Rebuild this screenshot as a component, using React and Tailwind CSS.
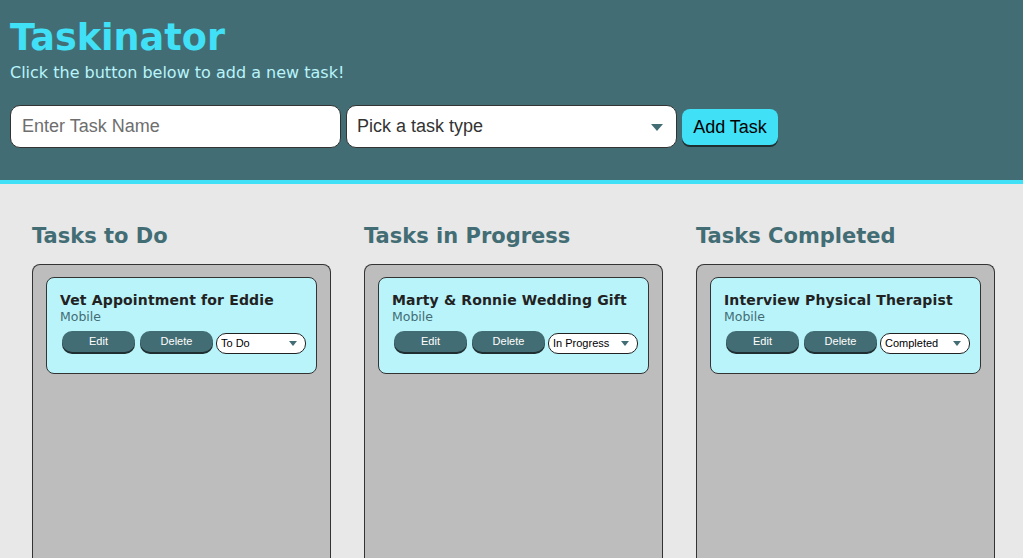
import { useState } from 'react';

/* ── Task card ─────────────────────────────────────────────── */
function TaskCard({ name, type, status }) {
  const [value, setValue] = useState(status);
  return (
    <div className="mx-[13px] mt-[11px] h-[97px] rounded-[8px] border border-[#333] bg-[#b9f4fb] px-[13px] pt-[14px]">
      <h3 className="text-[14px] font-bold leading-[17px] tracking-[0.15px] text-[#222] [font-family:'DejaVu_Sans',Verdana,sans-serif]">
        {name}
      </h3>
      <p className="text-[12.5px] leading-[15px] text-[#436d74] [font-family:'DejaVu_Sans',Verdana,sans-serif]">
        {type}
      </p>
      <div className="mt-[7px] flex items-start pl-[2px] [font-family:'Liberation_Sans',Arial,sans-serif]">
        <button className="h-[21px] w-[73px] shrink-0 rounded-[10px] bg-[#436d74] text-[11px] font-medium text-white shadow-[0_2px_0_#1f2f31]">
          Edit
        </button>
        <button className="ml-[5px] h-[21px] w-[73px] shrink-0 rounded-[10px] bg-[#436d74] text-[11px] font-medium text-white shadow-[0_2px_0_#1f2f31]">
          Delete
        </button>
        <div className="relative ml-[3px] mt-[2px] flex shrink-0">
          <select
            value={value}
            onChange={e => setValue(e.target.value)}
            className="block h-[21px] w-[90px] appearance-none rounded-[10px] border border-[#222] bg-white pl-[4px] text-[11px] text-black outline-none"
          >
            <option>To Do</option>
            <option>In Progress</option>
            <option>Completed</option>
          </select>
          <span className="pointer-events-none absolute right-[9px] top-[8px] h-0 w-0 border-x-[4px] border-t-[5px] border-x-transparent border-t-[#436d74]" />
        </div>
      </div>
    </div>
  );
}

/* ── Column ────────────────────────────────────────────────── */
function Column({ title, children }) {
  return (
    <section className="flex w-[299px] flex-col">
      <h2 className="text-[21px] font-bold leading-[25px] text-[#436d74] [font-family:'DejaVu_Sans',Verdana,sans-serif]">
        {title}
      </h2>
      <div className="mt-[15px] h-[310px] rounded-t-[8px] border border-b-0 border-[#333] bg-[#bdbdbd] pt-px">
        {children}
      </div>
    </section>
  );
}

export default function App() {
  return (
    <div className="h-[558px] overflow-hidden bg-[#e8e8e8]">
      {/* Header */}
      <header className="h-[184px] border-b-[4px] border-[#40e0f7] bg-[#436d74] pl-[10px] pt-[16px]">
        <h1 className="text-[36.6px] font-bold leading-[43px] text-[#40e0f7] [font-family:'DejaVu_Sans',Verdana,sans-serif]">
          Taskinator
        </h1>
        <p className="mt-[4px] text-[16px] leading-[19px] text-[#b9f4fb] [font-family:'DejaVu_Sans',Verdana,sans-serif]">
          Click the button below to add a new task!
        </p>
        <form
          className="mt-[23px] flex items-start gap-[5px] [font-family:'Liberation_Sans',Arial,sans-serif]"
          onSubmit={e => e.preventDefault()}
        >
          <input
            type="text"
            placeholder="Enter Task Name"
            className="h-[43px] w-[331px] rounded-[10px] border border-[#333] bg-white px-[11px] text-[18px] text-[#333] outline-none placeholder:text-[#6e6e6e]"
          />
          <div className="relative flex">
            <select
              defaultValue=""
              className="block h-[43px] w-[331px] appearance-none rounded-[10px] border border-[#333] bg-white px-[10px] text-[18px] text-[#333] outline-none"
            >
              <option value="" disabled>Pick a task type</option>
              <option>Web</option>
              <option>Mobile</option>
              <option>Print</option>
            </select>
            <span className="pointer-events-none absolute right-[14px] top-[19px] h-0 w-0 border-x-[6px] border-t-[7px] border-x-transparent border-t-[#436d74]" />
          </div>
          <button
            type="submit"
            className="mt-[4px] h-[36px] w-[96px] rounded-[8px] bg-[#40e0f7] text-[18px] text-black shadow-[0_2px_0_#1f2f31]"
          >
            Add Task
          </button>
        </form>
      </header>

      {/* Task columns */}
      <main className="flex gap-[33px] pl-[32px] pt-[40px]">
        <Column title="Tasks to Do">
          <TaskCard name="Vet Appointment for Eddie" type="Mobile" status="To Do" />
        </Column>
        <Column title="Tasks in Progress">
          <TaskCard name="Marty & Ronnie Wedding Gift" type="Mobile" status="In Progress" />
        </Column>
        <Column title="Tasks Completed">
          <TaskCard name="Interview Physical Therapist" type="Mobile" status="Completed" />
        </Column>
      </main>
    </div>
  );
}
